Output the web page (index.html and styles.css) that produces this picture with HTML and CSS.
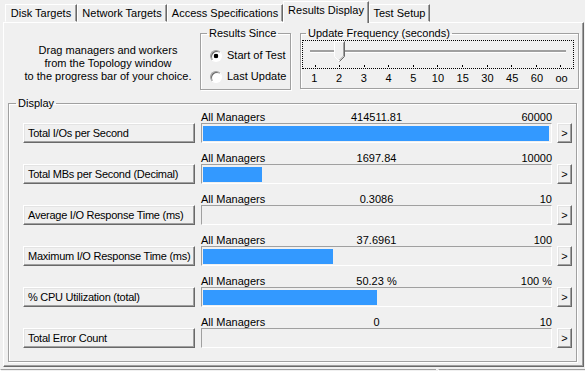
FILE: index.html
```html
<!DOCTYPE html>
<html lang="en">
<head>
    <meta charset="UTF-8">
    <meta name="viewport" content="width=device-width, initial-scale=1.0">
    <title>Results Display</title>
    <link rel="stylesheet" href="styles.css">
</head>
<body>
    <div class="tabs">
        <div class="tab tab-disk">Disk Targets</div>
        <div class="tab tab-net">Network Targets</div>
        <div class="tab tab-access">Access Specifications</div>
        <div class="tab tab-results active">Results Display</div>
        <div class="tab tab-setup">Test Setup</div>
    </div>

    <div class="panel">
        <div class="top-row">
            <p class="intro">Drag managers and workers<br>from the Topology window<br>to the progress bar of your choice.</p>

            <fieldset class="group results-since">
                <legend>Results Since</legend>
                <label class="radio"><span class="radio-dot checked"></span>Start of Test</label>
                <label class="radio"><span class="radio-dot"></span>Last Update</label>
            </fieldset>

            <fieldset class="group update-freq">
                <legend>Update Frequency (seconds)</legend>
                <div class="slider">
                    <div class="track"></div>
                    <svg class="thumb" width="11" height="21" viewBox="0 0 11 21">
                        <path d="M0.5 15.5 V0.5 H10.5 V15.5 L5.5 20.5 Z" fill="#f0f0f0"/>
                        <path d="M0.5 15.5 V0.5 H9.5" stroke="#fff" fill="none"/>
                        <path d="M0.5 15.5 L5 20" stroke="#fff" fill="none"/>
                        <path d="M10.5 0.5 V15.5 L5.5 20.5" stroke="#696969" fill="none"/>
                        <path d="M9.5 1.5 V15 L5.5 19" stroke="#a0a0a0" fill="none"/>
                    </svg>
                    <div class="ticks">
                        <span></span><span></span><span></span><span></span><span></span><span></span>
                        <span></span><span></span><span></span><span></span><span></span>
                    </div>
                </div>
                <div class="tick-labels">
                    <span>1</span><span>2</span><span>3</span><span>4</span><span>5</span><span>10</span>
                    <span>15</span><span>30</span><span>45</span><span>60</span><span>oo</span>
                </div>
            </fieldset>
        </div>

        <fieldset class="group display">
            <legend>Display</legend>

            <div class="meter">
                <button class="meter-btn">Total I/Os per Second</button>
                <div class="meter-head"><span>All Managers</span><span>414511.81</span><span class="max">60000</span></div>
                <div class="bar"><div class="fill" style="width: 100%"></div></div>
                <button class="arrow">&gt;</button>
            </div>

            <div class="meter">
                <button class="meter-btn">Total MBs per Second (Decimal)</button>
                <div class="meter-head"><span>All Managers</span><span>1697.84</span><span class="max">10000</span></div>
                <div class="bar"><div class="fill" style="width: 16.98%"></div></div>
                <button class="arrow">&gt;</button>
            </div>

            <div class="meter">
                <button class="meter-btn">Average I/O Response Time (ms)</button>
                <div class="meter-head"><span>All Managers</span><span>0.3086</span><span class="max">10</span></div>
                <div class="bar"><div class="fill" style="width: 0%"></div></div>
                <button class="arrow">&gt;</button>
            </div>

            <div class="meter">
                <button class="meter-btn">Maximum I/O Response Time (ms)</button>
                <div class="meter-head"><span>All Managers</span><span>37.6961</span><span class="max">100</span></div>
                <div class="bar"><div class="fill" style="width: 37.7%"></div></div>
                <button class="arrow">&gt;</button>
            </div>

            <div class="meter">
                <button class="meter-btn">% CPU Utilization (total)</button>
                <div class="meter-head"><span>All Managers</span><span>50.23 %</span><span class="max">100 %</span></div>
                <div class="bar"><div class="fill" style="width: 50.23%"></div></div>
                <button class="arrow">&gt;</button>
            </div>

            <div class="meter">
                <button class="meter-btn">Total Error Count</button>
                <div class="meter-head"><span>All Managers</span><span>0</span><span class="max">10</span></div>
                <div class="bar"><div class="fill" style="width: 0%"></div></div>
                <button class="arrow">&gt;</button>
            </div>
        </fieldset>
    </div>

    <div class="footer">
        <div class="footer-left"></div>
        <div class="footer-right"></div>
    </div>
</body>
</html>
```

FILE: styles.css
```css
* {
    box-sizing: border-box;
}
html, body {
    margin: 0;
    height: 100%;
    overflow: hidden;
}
body {
    font-family: "Liberation Sans", Arial, sans-serif;
    font-size: 11px;
    line-height: 13px;
    color: #000;
    background-color: #f0f0f0;
}

/* tab strip */
.tabs {
    display: flex;
    align-items: flex-end;
    height: 22px;
    padding-left: 5px;
    position: relative;
    z-index: 2;
}
.tab {
    height: 18px;
    line-height: 17px;
    text-align: center;
    white-space: nowrap;
    border: 1px solid;
    border-color: #fff #696969 transparent #fff;
    box-shadow: inset -1px 0 #a0a0a0;
    background-color: #f0f0f0;
}
.tab-disk { width: 72px; }
.tab-net { width: 90px; }
.tab-access { width: 116px; }
.tab-results { width: 86px; }
.tab-setup { width: 61px; }
.tab.active {
    height: 22px;
    line-height: 17px;
    margin-bottom: -1px;
    border-bottom: none;
}

/* main page */
.panel {
    width: 581px;
    height: 345px;
    margin-left: 3px;
    border: 1px solid;
    border-color: #fff #696969 #696969 #fff;
    box-shadow: inset -1px -1px #a0a0a0;
    position: relative;
    z-index: 1;
}
.top-row {
    display: flex;
    align-items: flex-start;
    margin-top: 4px;
}
.intro {
    width: 184px;
    margin: 0 0 0 12px;
    padding-top: 17px;
    text-align: center;
}

/* group boxes */
.group {
    margin: 0;
    min-width: 0;
    border: 1px solid #a0a0a0;
    box-shadow: 1px 1px 0 #fff, inset 1px 1px 0 #fff;
}
.group legend {
    padding: 0 2px;
    line-height: 13px;
}
.results-since {
    width: 91px;
    height: 63px;
    padding: 5px 0 0 9px;
}
.results-since legend {
    margin-left: -3px;
}
.radio {
    display: flex;
    align-items: center;
    height: 21px;
    white-space: nowrap;
}
.radio-dot {
    width: 12px;
    height: 12px;
    margin-right: 5px;
    border-radius: 50%;
    border: 1px solid;
    border-color: #a0a0a0 #fff #fff #a0a0a0;
    background-color: #fff;
    box-shadow: inset 1px 1px #696969;
}
.radio-dot.checked {
    background: radial-gradient(circle at 50% 50%, #000 0 2px, #fff 2.6px);
}

.update-freq {
    width: 279px;
    height: 62px;
    margin-left: 9px;
    padding: 0 4px 0 1px;
}
.update-freq legend {
    margin-left: 4px;
}
.slider {
    position: relative;
    height: 29px;
    border: 1px dotted #000;
}
.track {
    height: 3px;
    margin: 9px 7px 0 7px;
    background-color: #a0a0a0;
    border-bottom: 1px solid #fff;
}
.thumb {
    position: absolute;
    left: 31px;
    top: 0;
}
.ticks {
    display: grid;
    grid-template-columns: repeat(11, 1fr);
    margin-top: 12px;
}
.ticks span {
    justify-self: center;
    width: 1px;
    height: 2px;
    background-color: #000;
}
.tick-labels {
    display: grid;
    grid-template-columns: repeat(11, 1fr);
    margin-top: 3px;
    text-align: center;
}

/* display meters */
.display {
    width: 569px;
    height: 265px;
    margin: 7px 0 0 4px;
    padding: 2px 4px 0 14px;
}
.display legend {
    margin-left: -7px;
}
.meter {
    display: grid;
    grid-template-columns: 178px 356px 15px;
    grid-template-rows: 11px 20px;
    margin-bottom: 10px;
}
.meter-btn, .arrow {
    font-family: inherit;
    font-size: 11px;
    color: #000;
    background-color: #f0f0f0;
    border: 1px solid;
    border-color: #fff #696969 #696969 #fff;
    box-shadow: inset -1px -1px #a0a0a0, inset 1px 1px #e3e3e3;
    padding: 0;
    margin: 0;
}
.meter-btn {
    grid-column: 1;
    grid-row: 2;
    width: 172px;
    height: 20px;
    padding-left: 4px;
    text-align: left;
    white-space: nowrap;
    letter-spacing: -0.25px;
}
.meter-head {
    grid-column: 2;
    grid-row: 1;
    width: 351px;
    display: grid;
    grid-template-columns: 1fr auto 1fr;
    line-height: 11px;
    white-space: nowrap;
}
.meter-head .max {
    text-align: right;
}
.bar {
    grid-column: 2;
    grid-row: 2;
    width: 351px;
    height: 20px;
    border: 1px solid;
    border-color: #a0a0a0 #fff #fff #a0a0a0;
    padding: 2px 2px 1px 1px;
}
.fill {
    height: 100%;
    background-color: #3399ff;
}
.arrow {
    grid-column: 3;
    grid-row: 2;
    width: 15px;
    height: 20px;
    text-align: center;
}

/* strip under the page */
.footer {
    display: flex;
    margin-top: 2px;
    height: 4px;
}
.footer-left {
    width: 436px;
    border-top: 1px solid #a0a0a0;
    border-left: 1px solid #fff;
    margin-right: 2px;
}
.footer-right {
    flex: 1;
    border-top: 1px solid #a0a0a0;
    border-left: 1px solid #fff;
}
```
